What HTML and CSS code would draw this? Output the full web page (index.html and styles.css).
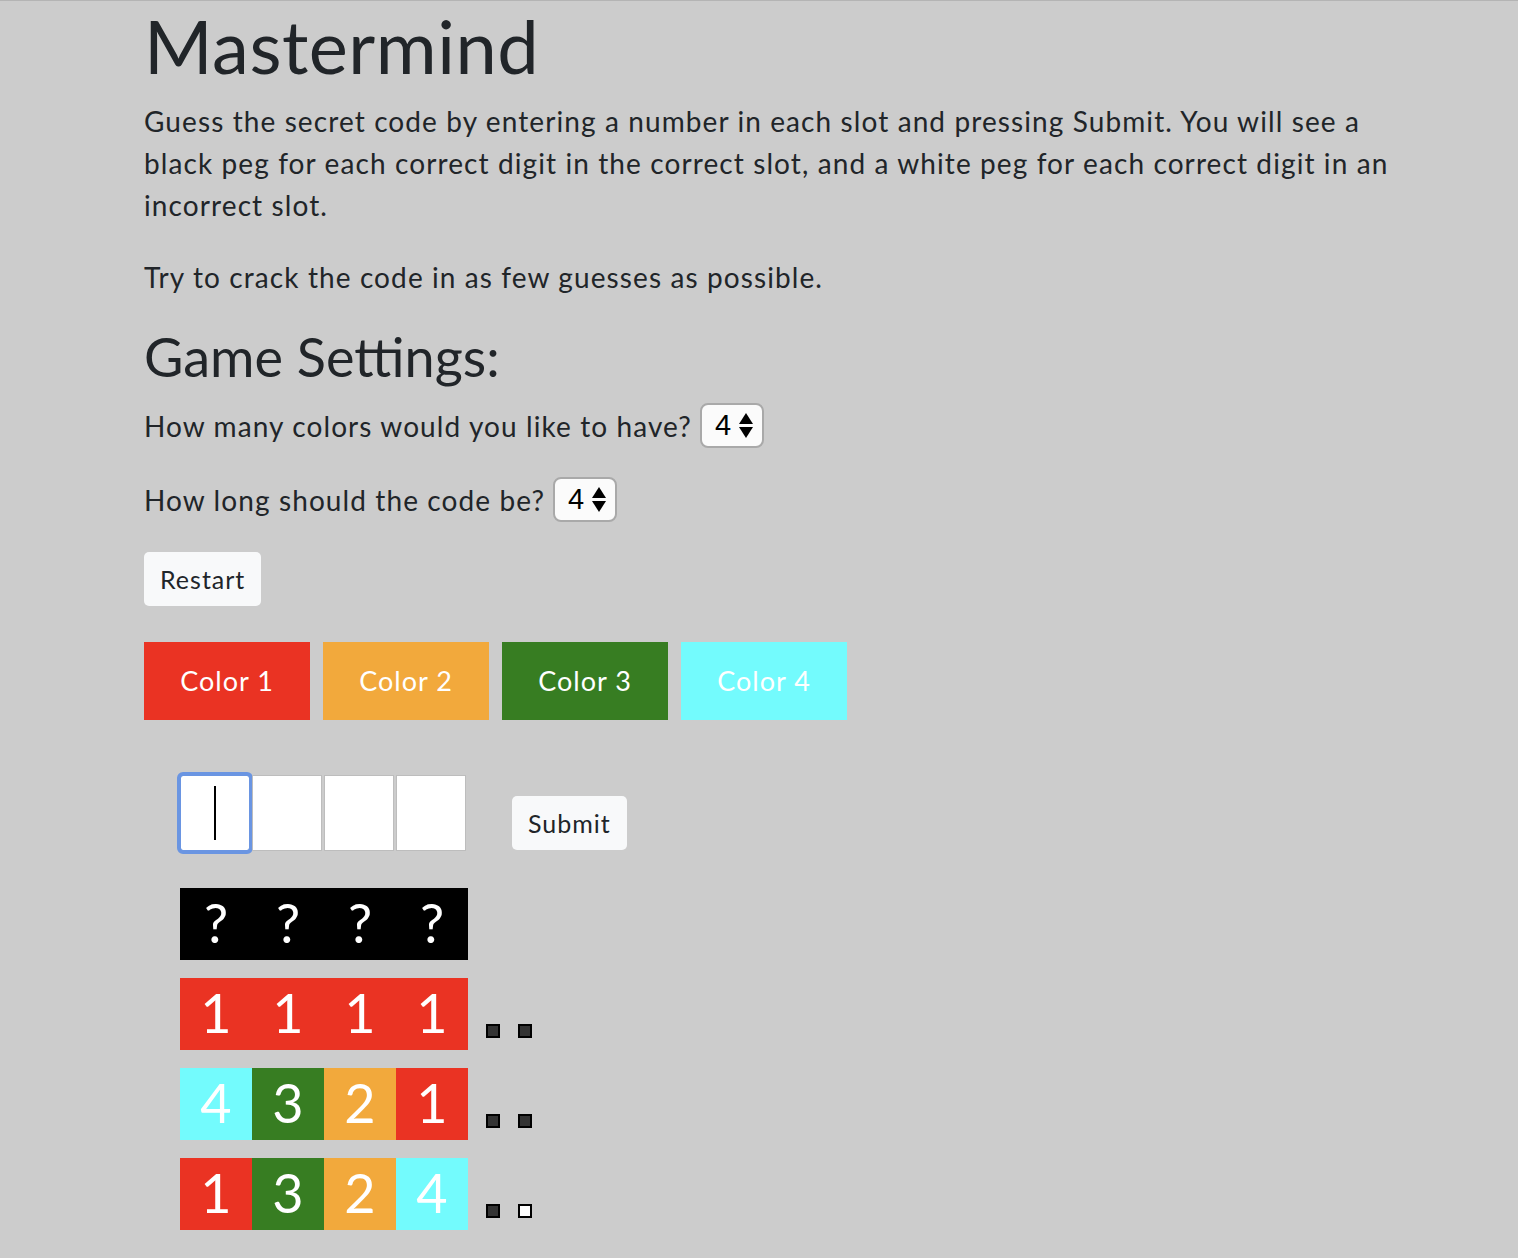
FILE: index.html
```html
<!DOCTYPE html>
<html lang="en">
<head>
<meta charset="utf-8">
<title>Mastermind</title>
<link rel="stylesheet" href="styles.css">
</head>
<body>
<main class="container">
  <h1 class="title">Mastermind</h1>
  <p class="lead">Guess the secret code by entering a number in each slot and pressing Submit. You will see a black peg for each correct digit in the correct slot, and a white peg for each correct digit in an incorrect slot.</p>
  <p class="lead lead-2">Try to crack the code in as few guesses as possible.</p>
  <h2 class="subtitle">Game Settings:</h2>
  <div class="setting">
    <label class="setting-label">How many colors would you like to have?</label>
    <span class="num-input"><span class="num-value">4</span><svg class="spin" width="14" height="26" viewBox="0 0 14 26"><path d="M7 0 L14 11 L0 11 Z" fill="#000"/><path d="M0 14 L14 14 L7 25 Z" fill="#000"/></svg></span>
  </div>
  <div class="setting">
    <label class="setting-label">How long should the code be?</label>
    <span class="num-input"><span class="num-value">4</span><svg class="spin" width="14" height="26" viewBox="0 0 14 26"><path d="M7 0 L14 11 L0 11 Z" fill="#000"/><path d="M0 14 L14 14 L7 25 Z" fill="#000"/></svg></span>
  </div>
  <button class="btn btn-restart" type="button">Restart</button>
  <div class="palette">
    <button class="color-btn c1" type="button">Color 1</button>
    <button class="color-btn c2" type="button">Color 2</button>
    <button class="color-btn c3" type="button">Color 3</button>
    <button class="color-btn c4" type="button">Color 4</button>
  </div>
  <div class="board">
    <div class="entry-row">
      <div class="slots">
        <div class="slot focused"><span class="caret"></span></div>
        <div class="slot"></div>
        <div class="slot"></div>
        <div class="slot"></div>
      </div>
      <button class="btn btn-submit" type="button">Submit</button>
    </div>
    <div class="row">
      <div class="code secret"><span class="cell">?</span><span class="cell">?</span><span class="cell">?</span><span class="cell">?</span></div>
    </div>
    <div class="row">
      <div class="code"><span class="cell c1">1</span><span class="cell c1">1</span><span class="cell c1">1</span><span class="cell c1">1</span></div>
      <div class="pegs"><span class="peg black"></span><span class="peg black"></span></div>
    </div>
    <div class="row">
      <div class="code"><span class="cell c4">4</span><span class="cell c3">3</span><span class="cell c2">2</span><span class="cell c1">1</span></div>
      <div class="pegs"><span class="peg black"></span><span class="peg black"></span></div>
    </div>
    <div class="row">
      <div class="code"><span class="cell c1">1</span><span class="cell c3">3</span><span class="cell c2">2</span><span class="cell c4">4</span></div>
      <div class="pegs"><span class="peg black"></span><span class="peg white"></span></div>
    </div>
  </div>
</main>
</body>
</html>
```
FILE: styles.css
```css
* { box-sizing: border-box; }
html, body { margin: 0; padding: 0; }
body {
  background: #cccccc;
  border-top: 1px solid #b4b4b4;
  color: #212529;
  font-family: Lato, "Open Sans", sans-serif;
  letter-spacing: 1.1px;
  min-height: 1258px;
}
.container {
  padding: 0 124px 0 144px;
}
.title {
  font-size: 74px;
  font-weight: 400;
  line-height: 1;
  margin: 8px 0 0;
  letter-spacing: 0.5px;
}
.lead {
  font-size: 28px;
  line-height: 42px;
  margin: 17px 0 0;
  font-weight: 400;
}
.lead-2 { margin-top: 30px; }
.subtitle {
  font-size: 54px;
  font-weight: 400;
  line-height: 1.2;
  letter-spacing: 0;
  margin: 27px 0 14px;
}
.setting {
  display: flex;
  align-items: center;
  gap: 8px;
  font-size: 28px;
  height: 44px;
  margin-bottom: 30px;
}
.num-input {
  display: inline-flex;
  align-items: center;
  gap: 8px;
  height: 45px;
  padding: 0 9px 0 13px;
  background: #fbfbfb;
  border: 2px solid #a9a9a9;
  border-radius: 8px;
  font-family: "Liberation Sans", Arial, sans-serif;
  font-size: 29px;
  letter-spacing: 0;
  color: #000;
}
.spin { margin-top: 1px; }
.btn {
  font-family: inherit;
  font-size: 25px;
  letter-spacing: 1px;
  color: #212529;
  background: #f8f9fa;
  border: none;
  border-radius: 5px;
  padding: 0 16px;
  height: 54px;
}
.btn-restart { margin-top: 2px; display: block; }
.palette {
  display: flex;
  gap: 13px;
  margin-top: 36px;
}
.color-btn {
  width: 166px;
  height: 78px;
  border: none;
  color: #fff;
  font-family: inherit;
  font-size: 27px;
  letter-spacing: 1px;
}
.c1 { background: #ea3323; }
.c2 { background: #f2a93c; }
.c3 { background: #377d22; }
.c4 { background: #73fbfd; }
.board {
  padding-left: 36px;
  margin-top: 55px;
}
.entry-row {
  display: flex;
  align-items: flex-start;
  gap: 44px;
}
.btn-submit { margin-top: 21px; }
.slots {
  display: flex;
  gap: 2px;
  width: 288px;
}
.slot {
  width: 70px;
  height: 76px;
  background: #fff;
  border: 1px solid #bdbdbd;
  display: flex;
  align-items: center;
  justify-content: center;
}
.slot.focused {
  border: 1px solid #8fb0e8;
  outline: 4px solid #6a95e2;
  outline-offset: -1px;
  border-radius: 3px;
}
.caret {
  width: 2px;
  height: 54px;
  background: #000;
}
.row {
  display: flex;
  align-items: flex-end;
  margin-top: 18px;
}
.entry-row + .row { margin-top: 37px; }
.code {
  display: flex;
  width: 288px;
  height: 72px;
}
.secret { background: #000; }
.cell {
  width: 72px;
  height: 72px;
  display: flex;
  align-items: center;
  justify-content: center;
  color: #fff;
  font-family: Lato, "DejaVu Sans", sans-serif;
  letter-spacing: 0;
  font-size: 54px;
  padding-bottom: 2px;
}
.pegs {
  display: flex;
  gap: 18px;
  margin-left: 18px;
  margin-bottom: 12px;
}
.peg {
  width: 14px;
  height: 14px;
  border: 2px solid #000;
}
.peg.black { background: #333; }
.peg.white { background: #fff; }
```
